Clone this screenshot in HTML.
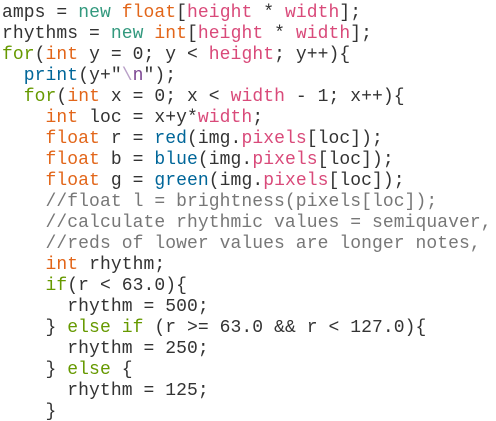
<!DOCTYPE html>
<html><head><meta charset="utf-8"><style>
html,body{margin:0;padding:0;background:#fff;width:496px;height:421px;overflow:hidden}
pre{margin:0;padding:3px 0 0 2px;font-family:"Liberation Mono",monospace;font-size:18px;line-height:21px;letter-spacing:0.08px;color:#333}
.n{color:#33997e}.t{color:#e2661a}.p{color:#d94a7a}.g{color:#669900}.f{color:#006699}.c{color:#777}.s{color:#7d4793}.e{color:#b9a0c8}
</style></head><body><pre>amps = <span class="n">new</span> <span class="t">float</span>[<span class="p">height</span> * <span class="p">width</span>];
rhythms = <span class="n">new</span> <span class="t">int</span>[<span class="p">height</span> * <span class="p">width</span>];
<span class="g">for</span>(<span class="t">int</span> y = 0; y &lt; <span class="p">height</span>; y++){
  <span class="f">print</span>(y+"<span class="e">\</span><span class="s">n</span>");
  <span class="g">for</span>(<span class="t">int</span> x = 0; x &lt; <span class="p">width</span> - 1; x++){
    <span class="t">int</span> loc = x+y*<span class="p">width</span>;
    <span class="t">float</span> r = <span class="f">red</span>(img.<span class="p">pixels</span>[loc]);
    <span class="t">float</span> b = <span class="f">blue</span>(img.<span class="p">pixels</span>[loc]);
    <span class="t">float</span> g = <span class="f">green</span>(img.<span class="p">pixels</span>[loc]);
    <span class="c">//float l = brightness(pixels[loc]);</span>
    <span class="c">//calculate rhythmic values = semiquaver,</span>
    <span class="c">//reds of lower values are longer notes,</span>
    <span class="t">int</span> rhythm;
    <span class="g">if</span>(r &lt; 63.0){
      rhythm = 500;
    } <span class="g">else if</span> (r &gt;= 63.0 &amp;&amp; r &lt; 127.0){
      rhythm = 250;
    } <span class="g">else</span> {
      rhythm = 125;
    }</pre></body></html>
